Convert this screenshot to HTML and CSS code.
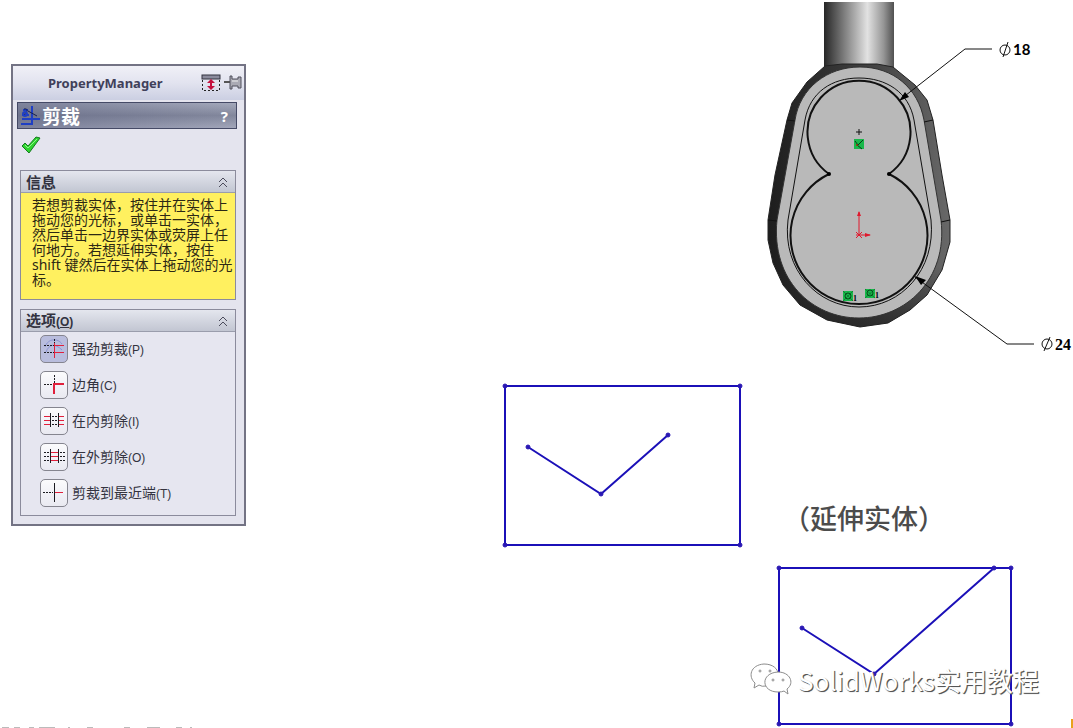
FILE: index.html
```html
<!DOCTYPE html>
<html lang="zh-CN">
<head>
    <meta charset="UTF-8">
    <meta name="viewport" content="width=device-width, initial-scale=1.0">
    <title>PropertyManager</title>
    <link rel="stylesheet" href="styles.css">
</head>
<body>
    <div class="page">
        <div class="side">
            <section class="panel">
                <header class="panel-header">
                    <h1>PropertyManager</h1>
                    <svg class="expand-icon" width="20" height="18" viewBox="0 0 20 18">
                        <rect x="1" y="1" width="18" height="4" fill="#8b8b9c" stroke="#33333f"/>
                        <path d="M1.500 6V16.500H18.500V6" fill="none" stroke="#222" stroke-dasharray="2 2"/>
                        <path d="M10 5L6 9H9V12H6L10 16L14 12H11V9H14Z" fill="#c4103e"/>
                    </svg>
                    <svg width="18" height="18" viewBox="0 0 18 18">
                        <path d="M0 8H6" stroke="#555" stroke-width="2"/>
                        <path d="M6 2H8V5H14V3H17V14H14V12H8V15H6Z" fill="#aaaab4" stroke="#50505c"/>
                        <path d="M8 7H14" stroke="#eee"/>
                    </svg>
                </header>

                <div class="title-bar">
                    <svg width="20" height="20" viewBox="0 0 20 20" fill="none" stroke="#1f3fc4" stroke-width="2">
                        <path d="M12 0V19M2 13H20M1 18H11M3 4H8M2 9H9"/>
                        <path d="M4 3C10 2 6 8 3 9M8 5L17 10" stroke="#17204f" stroke-width="1"/>
                        <circle cx="5" cy="8" r="2"/>
                    </svg>
                    <h2>剪裁</h2>
                    <button class="help" type="button">?</button>
                </div>

                <button class="ok" type="button" aria-label="确定">
                    <svg width="20" height="18" viewBox="0 0 20 18">
                        <path d="M1 10L4 7L7 10L15 1L19 2L8 17Z" fill="#2fd32f" stroke="#157a20" stroke-linejoin="round"/>
                        <path d="M4 9L7 12L16 3" fill="none" stroke="#8cf58a"/>
                    </svg>
                </button>

                <section class="group info">
                    <div class="group-header">
                        <h3>信息</h3>
                        <svg width="10" height="12" viewBox="0 0 10 12"><path d="M1 6L5 2L9 6M1 11L5 7L9 11"/></svg>
                    </div>
                    <p>若想剪裁实体，按住并在实体上拖动您的光标，或单击一实体，然后单击一边界实体或荧屏上任何地方。若想延伸实体，按住 shift 键然后在实体上拖动您的光标。</p>
                </section>

                <section class="group">
                    <div class="group-header">
                        <h3>选项<span class="key">(<u>O</u>)</span></h3>
                        <svg width="10" height="12" viewBox="0 0 10 12"><path d="M1 6L5 2L9 6M1 11L5 7L9 11"/></svg>
                    </div>
                    <div class="options">
                        <div class="option">
                            <button class="tool active" id="power" type="button" aria-pressed="true">
                                <svg width="22" height="22" viewBox="0 0 22 22">
                                    <path class="ghost" d="M2 9C5 0 15 0 19 6M3 14C6 6 12 5 19 12"/>
                                    <path class="dash" d="M1 7.500H11M1 14.500H11M11.500 1V6"/>
                                    <path class="cut" d="M11 7.500H21M11 14.500H21M11.500 5V20"/>
                                </svg>
                            </button>
                            <label for="power">强劲剪裁<span class="key">(P)</span></label>
                        </div>
                        <div class="option">
                            <button class="tool" id="corner" type="button">
                                <svg width="22" height="22" viewBox="0 0 22 22">
                                    <path class="dash" d="M1 10.500H10M11.500 1V9"/>
                                    <path class="cut thick" d="M21 10H11V20"/>
                                </svg>
                            </button>
                            <label for="corner">边角<span class="key">(C)</span></label>
                        </div>
                        <div class="option">
                            <button class="tool" id="inside" type="button">
                                <svg width="22" height="22" viewBox="0 0 22 22">
                                    <path class="cut" d="M1 6.500H7M1 10.500H7M1 14.500H7M15 6.500H21M15 10.500H21M15 14.500H21"/>
                                    <path class="dash" d="M9 6.500H15M9 10.500H15M9 14.500H15"/>
                                    <path class="edge" d="M7.500 3V17M15.500 3V17"/>
                                </svg>
                            </button>
                            <label for="inside">在内剪除<span class="key">(I)</span></label>
                        </div>
                        <div class="option">
                            <button class="tool" id="outside" type="button">
                                <svg width="22" height="22" viewBox="0 0 22 22">
                                    <path class="dash" d="M1 6.500H7M1 10.500H7M1 14.500H7M17 6.500H22M17 10.500H22M17 14.500H22"/>
                                    <path class="cut" d="M7 6.500H15M7 10.500H15M7 14.500H15"/>
                                    <path class="edge" d="M7.500 3V17M15.500 3V17"/>
                                </svg>
                            </button>
                            <label for="outside">在外剪除<span class="key">(O)</span></label>
                        </div>
                        <div class="option">
                            <button class="tool" id="closest" type="button">
                                <svg width="22" height="22" viewBox="0 0 22 22">
                                    <path class="dash" d="M0 10.500H10"/>
                                    <path class="cut" d="M12 10.500H20"/>
                                    <path class="edge" d="M11.500 1V20"/>
                                </svg>
                            </button>
                            <label for="closest">剪裁到最近端<span class="key">(T)</span></label>
                        </div>
                    </div>
                </section>
            </section>
            <svg class="page-edge" width="200" height="1" viewBox="0 0 200 1">
                <path d="M2 1H9M14 1H20M29 1H34M39 1H55M68 1H70M87 1H93M124 1H130M147 1H160M176 1H182M190 1H192" stroke="#bbb" stroke-width="2"/>
            </svg>
        </div>

        <div class="sheet">
            <svg class="drawing" viewBox="500 0 573 728">
                <defs>
                    <linearGradient id="tube">
                        <stop offset="0" stop-color="#262626"/>
                        <stop offset="0.250" stop-color="#727272"/>
                        <stop offset="0.620" stop-color="#e2e2e2"/>
                        <stop offset="0.850" stop-color="#969696"/>
                        <stop offset="1" stop-color="#505050"/>
                    </linearGradient>
                    <linearGradient id="rim">
                        <stop offset="0" stop-color="#1d1d1d"/>
                        <stop offset="0.500" stop-color="#3c3c3c"/>
                        <stop offset="1" stop-color="#686868"/>
                    </linearGradient>
                    <linearGradient id="shade" x2="0" y2="1">
                        <stop offset="0.600" stop-color="#222" stop-opacity="0"/>
                        <stop offset="1" stop-color="#222" stop-opacity="0.700"/>
                    </linearGradient>
                </defs>

                <!-- part body -->
                <rect x="824" y="2" width="70" height="68" fill="url(#tube)"/>
                <path d="M825 66L807 82L792 103L787 120L775 175L768 220V240L773 263L783 285L800 305L827 320L860 327L888 323L910 310L927 295L942 270L950 242V220L942 175L933 120L927 100L915 85L893 67L877 64H842Z" fill="url(#rim)" stroke="#222"/>
                <path d="M775 175L768 220V240L773 263L783 285L800 305L827 320L860 327L888 323L910 310L927 295L942 270L950 242V220L942 175Z" fill="url(#shade)"/>
                <path d="M795 120C800 88 827 67 860 67C893 67 918 88 924 120L941 220C948 280 905 318 859 318C812 318 771 280 777 220Z" fill="#b9b9b9" stroke="#333"/>
                <path d="M787 120L795 121M933 120L924 122M768 220L777 221M950 220L941 222" stroke="#111"/>

                <!-- sketch -->
                <g fill="none" stroke="#111">
                    <path d="M805 120C810 92 832 78 859 78C886 78 909 92 914 120L931 220C936 270 901 307 859 307C818 307 782 270 788 220Z"/>
                    <path d="M829 174A51.500 51.500 0 1 1 889 174A68.500 68.500 0 1 1 829 174" stroke-width="2"/>
                    <path d="M856 132H862M859 129V135"/>
                    <path d="M901 99L965 49H992M915 277L1007 344H1034"/>
                </g>
                <path d="M899 101L905 92L909 97ZM915 276L926 280L921 285Z"/>
                <circle cx="829" cy="174" r="2"/>
                <circle cx="889" cy="174" r="2"/>
                <g fill="#18b84a">
                    <rect x="854" y="139" width="10" height="10"/>
                    <rect x="843" y="291" width="10" height="10"/>
                    <rect x="865" y="289" width="10" height="9"/>
                </g>
                <path d="M855 141L858 145L863 140M857 145L862 149" fill="none" stroke="#073b15"/>
                <circle cx="857" cy="145" r="1" fill="#a32a12"/>
                <g fill="none" stroke="#064d1b">
                    <circle cx="848" cy="296" r="3"/>
                    <circle cx="870" cy="293" r="3"/>
                    <path d="M843 291L853 301M853 291L843 301M865 289L875 298M875 289L865 298" stroke-opacity="0.500"/>
                </g>
                <text class="mark" x="853" y="301">1</text>
                <text class="mark" x="875" y="298">1</text>
                <path d="M859 235V212M856 235H870M856 232L862 238M862 232L856 238" stroke="#e0192d" fill="none"/>
                <path d="M857 216L859 211L861 216ZM865 233L871 235L865 237Z" fill="#e0192d"/>

                <!-- dimensions -->
                <g fill="none" stroke="#111">
                    <circle cx="1005" cy="50" r="5"/>
                    <path d="M1008 42L1003 57"/>
                    <circle cx="1047" cy="344" r="5"/>
                    <path d="M1050 337L1044 351"/>
                </g>
                <text class="dim" x="1013" y="55">18</text>
                <text class="dim serif" x="1055" y="350">24</text>

                <!-- before / after extending -->
                <g class="blue">
                    <path d="M505 386H740V545H505ZM528 447L601 494L668 435"/>
                    <path d="M779 568H1011V724H779ZM802 628L874 674L994 568"/>
                </g>
                <g class="points">
                    <circle cx="505" cy="386" r="2"/>
                    <circle cx="740" cy="386" r="2"/>
                    <circle cx="505" cy="545" r="2"/>
                    <circle cx="740" cy="545" r="2"/>
                    <circle cx="528" cy="447" r="2"/>
                    <circle cx="601" cy="494" r="2"/>
                    <circle cx="668" cy="435" r="2"/>
                    <circle cx="779" cy="568" r="2"/>
                    <circle cx="1011" cy="568" r="2"/>
                    <circle cx="779" cy="724" r="2"/>
                    <circle cx="1011" cy="724" r="2"/>
                    <circle cx="802" cy="628" r="2"/>
                    <circle cx="874" cy="674" r="2"/>
                    <circle cx="994" cy="568" r="2"/>
                </g>
                <text class="caption" x="783" y="529">（延伸实体）</text>
                <rect x="1071" y="719" width="2" height="9" fill="#e9a11c"/>
            </svg>

            <div class="watermark">
                <svg width="42" height="34" viewBox="0 0 42 34">
                    <path d="M16 23Q12 24 9 22L4 25L5 20C-2 14 0 2 14 1C23 1 28 6 28 11"/>
                    <path d="M28 9C10 10 11 29 28 29Q32 29 34 28L38 31L37 26C45 20 40 9 28 9Z"/>
                    <circle cx="10" cy="8" r="1"/>
                    <circle cx="20" cy="8" r="1"/>
                    <circle cx="23" cy="17" r="1"/>
                    <circle cx="33" cy="17" r="1"/>
                </svg>
                <span>SolidWorks实用教程</span>
            </div>
        </div>
    </div>
</body>
</html>
```
FILE: styles.css
```css
body {
    font-family: "Noto Sans", "Noto Sans CJK SC", sans-serif;
    background-color: #fff;
    color: #33333f;
    margin: 0;
}

h1, h2, h3, p {
    margin: 0;
}

svg {
    display: block;
}

button {
    padding: 0;
    border: none;
    background: none;
    cursor: pointer;
}

.page {
    display: grid;
    grid-template-columns: 500fr 573fr;
    overflow: hidden;
}

.side {
    display: flex;
    flex-direction: column;
    justify-content: space-between;
    align-items: flex-start;
}

.panel {
    box-sizing: border-box;
    width: 47%;
    min-width: 235px;
    margin: 64px 0 0 11px;
    padding-bottom: 8px;
    border: 2px solid #737384;
    background-color: #e4e4ee;
}

.panel-header {
    display: flex;
    align-items: center;
    height: 34px;
    padding: 0 2px 0 35px;
    background: linear-gradient(#f0f0f7, #e2e3ef 50%, #cbcfe2);
}

.panel-header h1 {
    flex: 1;
    font-size: 13px;
    color: #40405a;
}

.expand-icon {
    margin-right: 3px;
}

.title-bar {
    display: flex;
    align-items: center;
    gap: 2px;
    height: 25px;
    margin: 2px 7px 0 4px;
    padding: 0 8px 0 2px;
    border: 1px solid #454a66;
    background: linear-gradient(to right, rgba(90, 95, 125, 0.5), transparent), linear-gradient(#a4a9bb, #82879c 50%, #a2a6ba);
}

.title-bar h2 {
    flex: 1;
    font-family: "Noto Sans CJK SC", sans-serif;
    font-size: 19px;
    line-height: 25px;
    color: #fff;
}

.help {
    font: bold 15px "Noto Sans", sans-serif;
    color: #fff;
}

.ok {
    display: block;
    margin: 7px 0 0 8px;
}

.group {
    margin: 9px 8px 0 7px;
    border: 1px solid #8b8b9c;
    background-color: #e6e6f0;
}

.info {
    margin-top: 16px;
    background-color: #fff05f;
}

.group-header {
    display: flex;
    align-items: center;
    justify-content: space-between;
    height: 21px;
    padding: 0 7px 0 5px;
    border-bottom: 1px solid #9a9dac;
    background: linear-gradient(#e4e6ee, #c2c6d2);
}

.group-header h3 {
    font-family: "Noto Sans CJK SC", sans-serif;
    font-size: 15px;
    line-height: 21px;
}

.group-header svg {
    fill: none;
    stroke: #4b4b5b;
}

.info p {
    box-sizing: border-box;
    min-height: 106px;
    padding: 4px 0 0 11px;
    font-size: 14px;
    line-height: 15px;
    color: #2c2814;
}

.key {
    font-family: "Liberation Sans", sans-serif;
    font-size: 12px;
}

.options {
    display: flex;
    flex-direction: column;
    gap: 8px;
    padding: 3px 0 8px 19px;
}

.option {
    display: flex;
    align-items: center;
    gap: 4px;
    font-size: 14px;
    line-height: 20px;
}

.tool {
    display: flex;
    align-items: center;
    justify-content: center;
    box-sizing: border-box;
    width: 28px;
    height: 28px;
    border: 1px solid #85858f;
    border-radius: 5px;
    background: linear-gradient(#fbfbfd, #e9e9f1);
}

.tool.active {
    background: #b9bddd;
}

.tool svg {
    fill: none;
}

.tool .dash {
    stroke: #1c1c22;
    stroke-dasharray: 2 1;
}

.tool .cut {
    stroke: #e0203c;
}

.tool .thick {
    stroke-width: 2;
}

.tool .edge {
    stroke: #1c1c22;
}

.tool .ghost {
    stroke: #8b93d4;
}

.sheet {
    position: relative;
}

.drawing {
    width: 100%;
    height: auto;
}

.blue {
    fill: none;
    stroke: #1b10b8;
    stroke-width: 2;
}

.points {
    fill: #2a18b4;
    stroke: #2a18b4;
}

.dim {
    font: bold 15px Lato, sans-serif;
}

.dim.serif {
    font: bold 16px "Liberation Serif", serif;
}

.mark {
    font: bold 8px "Liberation Serif", serif;
}

.caption {
    font: 500 27px "Noto Sans CJK SC", sans-serif;
    fill: #4c4c4c;
}

/* white logo and name laid over the sketches */
.watermark {
    position: absolute;
    right: 34px;
    bottom: 30px;
    display: flex;
    align-items: center;
    gap: 6px;
    font: 26px/36px "Noto Sans CJK SC", sans-serif;
    color: #fff;
    text-shadow: 1px 1px 0 #555, 1px 1px 1px #777;
}

.watermark svg {
    fill: #fff;
    stroke: #8c8c8c;
}
```
